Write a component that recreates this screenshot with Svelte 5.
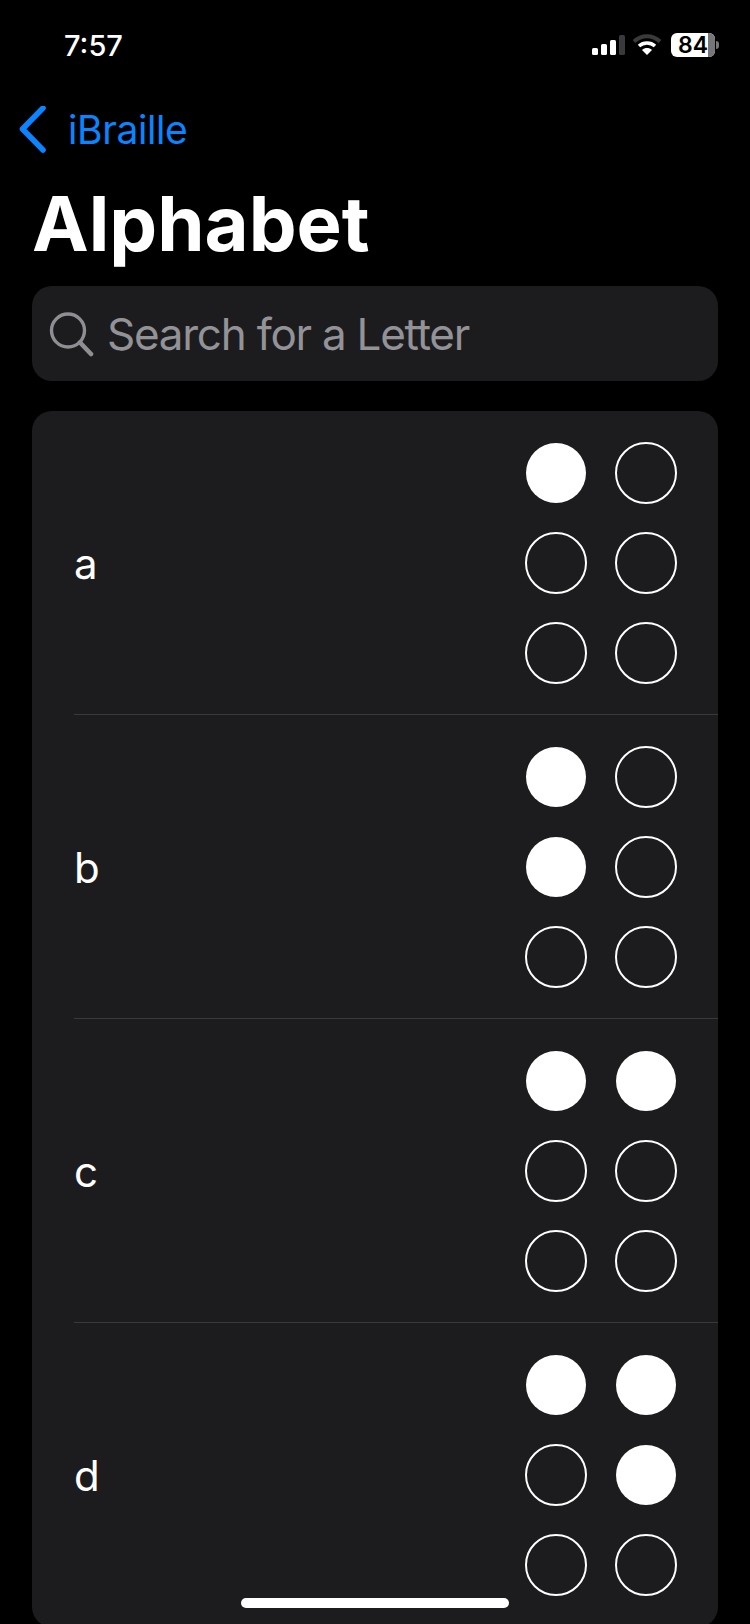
<script>
  const letters = [
    { name: "a", dots: [1, 0, 0, 0, 0, 0] },
    { name: "b", dots: [1, 0, 1, 0, 0, 0] },
    { name: "c", dots: [1, 1, 0, 0, 0, 0] },
    { name: "d", dots: [1, 1, 0, 1, 0, 0] },
  ];
</script>

<div class="screen">
  <header class="status">
    <span class="time">7:57</span>
    <div class="indicators">
      <svg width="34" height="22" viewBox="0 0 34 22">
        <rect x="1" y="14" width="6" height="7" rx="1.5" fill="#fff" />
        <rect x="10" y="10" width="6" height="11" rx="1.5" fill="#fff" />
        <rect x="19" y="6" width="6" height="15" rx="1.5" fill="#fff" />
        <rect x="28" y="1" width="6" height="20" rx="1.5" fill="#3a3a3c" />
      </svg>
      <svg class="wifi" width="30" height="22" viewBox="0 0 30 22">
        <path d="M2 7.5C9.5 .5 20.5 .5 28 7.5" fill="none" stroke="#3a3a3c" stroke-width="4" />
        <path d="M7 12C11.5 8 18.5 8 23 12" fill="none" stroke="#fff" stroke-width="3.6" />
        <path d="M15 21l-5-5c3-2.600 7-2.600 10 0z" fill="#fff" />
      </svg>
      <div class="battery">
        <span class="level">84</span>
        <span class="rest"></span>
      </div>
      <span class="nub"></span>
    </div>
  </header>

  <nav class="back">
    <svg width="30" height="48" viewBox="0 0 30 48">
      <path d="M25 2L4.500 23l20.500 21" fill="none" stroke="#0a84ff" stroke-width="5.600" stroke-linecap="round" stroke-linejoin="round" />
    </svg>
    <span>iBraille</span>
  </nav>

  <h1>Alphabet</h1>

  <div class="search">
    <svg width="46" height="46" viewBox="0 0 46 46">
      <circle cx="20" cy="19.500" r="16.500" fill="none" stroke="#8e8e93" stroke-width="3.400" />
      <path d="M32 31.500L43 43" fill="none" stroke="#8e8e93" stroke-width="4.600" stroke-linecap="round" />
    </svg>
    <span>Search for a Letter</span>
  </div>

  <section class="list">
    {#each letters as letter}
      <div class="row">
        <span class="letter">{letter.name}</span>
        <div class="cell">
          {#each letter.dots as on}
            <span class="dot" class:on></span>
          {/each}
        </div>
      </div>
    {/each}
  </section>

  <div class="home"></div>
</div>

<style>
  :global(body) {
    margin: 0;
    background: #000;
  }
  .screen {
    position: relative;
    width: 750px;
    height: 1624px;
    overflow: hidden;
    background: #000;
    color: #fff;
    font-family: Inter, "Noto Sans", sans-serif;
  }
  .status {
    height: 90px;
    display: flex;
    align-items: center;
    justify-content: space-between;
    padding: 0 31px 0 64px;
  }
  .time {
    font-size: 29px;
    font-weight: 500;
  }
  .indicators {
    display: flex;
    align-items: center;
  }
  .wifi {
    margin-left: 7px;
  }
  .battery {
    width: 44px;
    height: 24px;
    margin-left: 9px;
    border-radius: 6px;
    background: #fff;
    position: relative;
  }
  .level {
    position: absolute;
    left: 7px;
    top: 0;
    line-height: 24px;
    font-size: 23px;
    font-weight: 600;
    color: #000;
    z-index: 1;
  }
  .rest {
    position: absolute;
    right: 0;
    top: 0;
    bottom: 0;
    width: 7px;
    border-radius: 0 6px 6px 0;
    background: #767678;
  }
  .nub {
    width: 3px;
    height: 8px;
    margin-left: 1px;
    border-radius: 0 3px 3px 0;
    background: #767678;
  }
  .back {
    height: 80px;
    display: flex;
    align-items: center;
    gap: 20px;
    padding-left: 18px;
    color: #0a84ff;
    font-size: 39px;
    letter-spacing: -0.4px;
  }
  .back span {
    position: relative;
    top: -1px;
  }
  h1 {
    margin: 0;
    height: 116px;
    padding-left: 32px;
    font-size: 76px;
    line-height: 106px;
    font-weight: 700;
  }
  .search {
    height: 95px;
    margin: 0 32px;
    padding-left: 16px;
    display: flex;
    align-items: center;
    gap: 13px;
    border-radius: 20px;
    background: #1c1c1e;
    color: #929297;
    font-size: 44px;
    letter-spacing: -1.25px;
  }
  .list {
    margin: 30px 32px 0;
    border-radius: 20px;
    background: #1c1c1e;
  }
  .row {
    height: 304px;
    box-sizing: border-box;
    margin-left: 42px;
    padding-right: 41px;
    display: flex;
    align-items: center;
    justify-content: space-between;
    border-bottom: 1px solid #3a3a3c;
    font-size: 42px;
  }
  .letter {
    padding-top: 2px;
  }
  .cell {
    display: grid;
    grid-template-columns: 62px 62px;
    grid-auto-rows: 62px;
    gap: 28px;
  }
  .dot {
    box-sizing: border-box;
    border-radius: 50%;
    border: 2.5px solid #fff;
  }
  .dot.on {
    margin: 1px;
    border: none;
    background: #fff;
  }
  .home {
    position: absolute;
    left: 241px;
    top: 1598px;
    width: 268px;
    height: 10px;
    border-radius: 5px;
    background: #fff;
  }
</style>
